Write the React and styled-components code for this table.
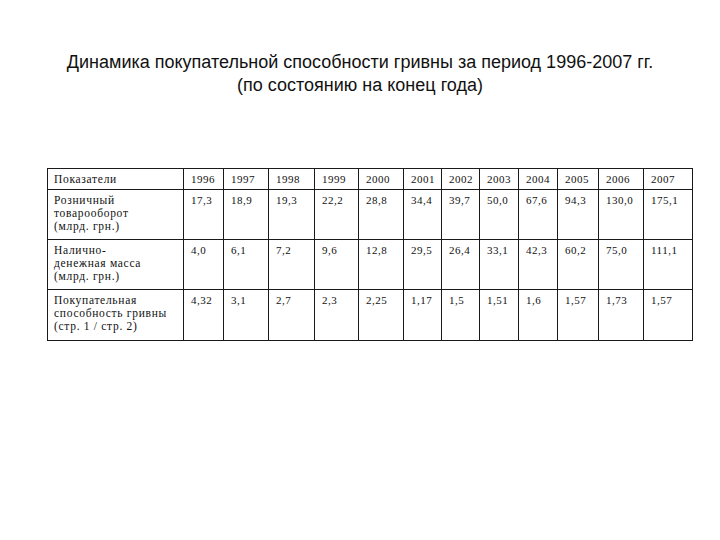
import React from 'react';
import styled, { createGlobalStyle } from 'styled-components';

const GlobalStyle = createGlobalStyle`
  html, body {
    margin: 0;
    padding: 0;
    background: #fff;
  }
  body {
    width: 720px;
    height: 540px;
    overflow: hidden;
  }
`;

const Page = styled.div`
  width: 720px;
  height: 540px;
  padding-top: 51px;
  box-sizing: border-box;
`;

const Title = styled.h1`
  margin: 0 0 71px 0;
  font-family: "Liberation Sans", Arial, sans-serif;
  font-weight: normal;
  font-size: 18px;
  line-height: 23px;
  color: #111;
  text-align: center;
`;

const Table = styled.table`
  margin-left: 47px;
  width: 645px;
  border-collapse: collapse;
  table-layout: fixed;
  font-family: "Liberation Serif", "Times New Roman", serif;
  color: #111;
`;

const Row = styled.tr`
  height: ${p => p.$h}px;
`;

const Cell = styled.td`
  border: 1px solid #1a1a1a;
  padding: 4px 2px 0 ${p => (p.$label ? 6 : 7)}px;
  vertical-align: top;
  font-size: ${p => (p.$label ? 11.5 : 11)}px;
  line-height: 13px;
  letter-spacing: ${p => (p.$label ? 0.7 : 0.5)}px;
  white-space: nowrap;
`;

const widths = [136, 40, 45, 46, 44, 45, 38, 38, 39, 39, 41, 45, 49];
const years = ['1996', '1997', '1998', '1999', '2000', '2001', '2002', '2003', '2004', '2005', '2006', '2007'];

const rows = [
  {
    label: ['Розничный', 'товарооборот', '(млрд. грн.)'],
    values: ['17,3', '18,9', '19,3', '22,2', '28,8', '34,4', '39,7', '50,0', '67,6', '94,3', '130,0', '175,1'],
    h: 50
  },
  {
    label: ['Налично-', 'денежная масса', '(млрд. грн.)'],
    values: ['4,0', '6,1', '7,2', '9,6', '12,8', '29,5', '26,4', '33,1', '42,3', '60,2', '75,0', '111,1'],
    h: 50
  },
  {
    label: ['Покупательная', 'способность гривны', '(стр. 1 / стр. 2)'],
    values: ['4,32', '3,1', '2,7', '2,3', '2,25', '1,17', '1,5', '1,51', '1,6', '1,57', '1,73', '1,57'],
    h: 51
  }
];

export default function App() {
  return (
    <Page>
      <GlobalStyle />
      <Title>
        Динамика покупательной способности гривны за период 1996-2007 гг.
        <br />
        (по состоянию на конец года)
      </Title>
      <Table>
        <colgroup>
          {widths.map((w, i) => <col key={i} style={{ width: w }} />)}
        </colgroup>
        <tbody>
          <Row $h={21}>
            <Cell $label>Показатели</Cell>
            {years.map(y => <Cell key={y}>{y}</Cell>)}
          </Row>
          {rows.map((r, i) => (
            <Row key={i} $h={r.h}>
              <Cell $label>
                {r.label.map((l, j) => (
                  <React.Fragment key={j}>
                    {j > 0 && <br />}
                    {l}
                  </React.Fragment>
                ))}
              </Cell>
              {r.values.map((v, j) => <Cell key={j}>{v}</Cell>)}
            </Row>
          ))}
        </tbody>
      </Table>
    </Page>
  );
}
